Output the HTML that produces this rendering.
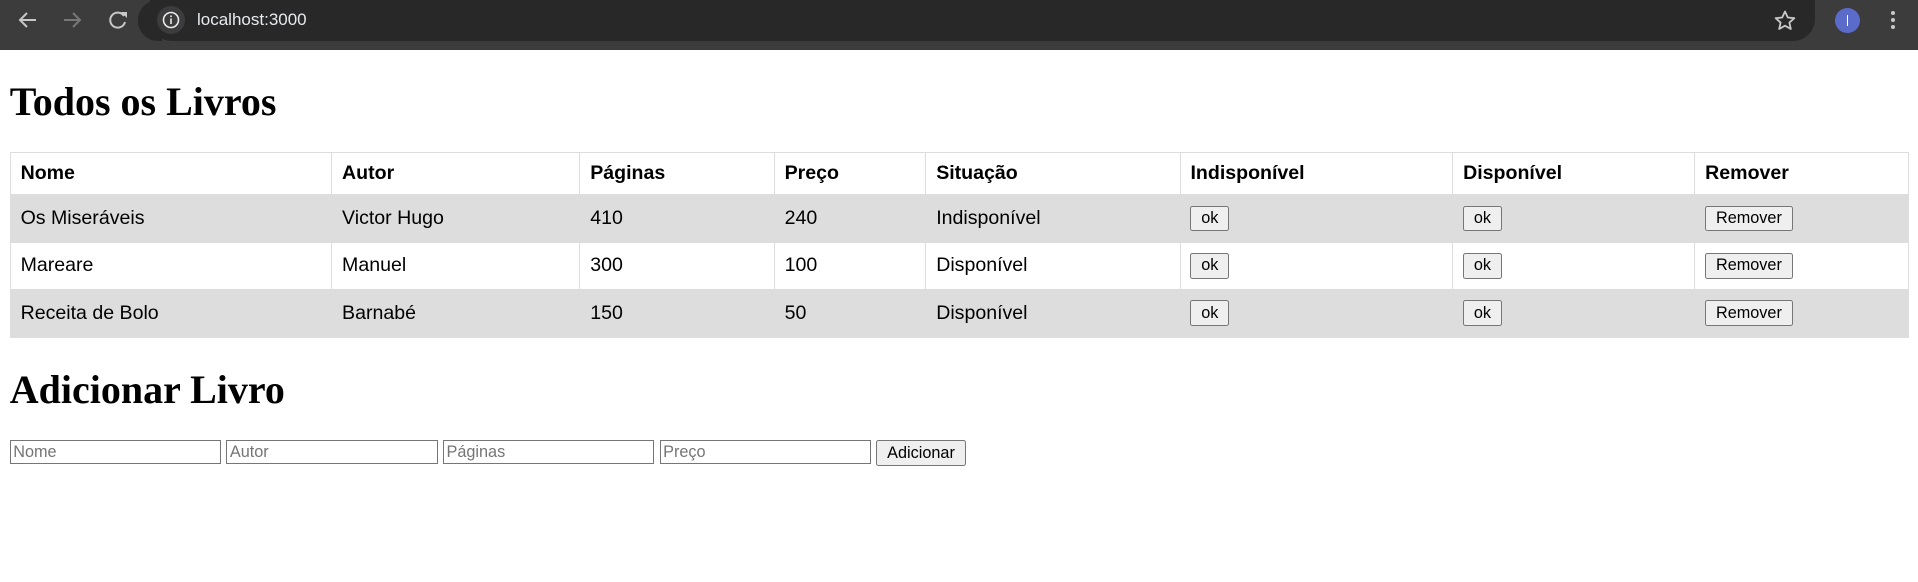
<!DOCTYPE html>
<html><head><meta charset="utf-8"><style>
html,body{margin:0;padding:0;background:#fff;}
#bar{position:absolute;left:0;top:0;width:1918px;height:50px;background:#3c3c3c;}
#pill{position:absolute;left:150px;top:0;width:1665px;height:41px;background:#282828;border-radius:0 0 22px 22px;border-top-left-radius:0;}
#pill:before{content:"";position:absolute;left:-12px;top:0;width:24px;height:41px;background:#282828;border-radius:20px 0 0 20px;}
#info{position:absolute;left:157px;top:6px;width:28px;height:28px;border-radius:50%;background:#3c3c3c;}
#url{position:absolute;left:197px;top:10px;color:#e8eaed;font:17px "Liberation Sans",sans-serif;}
#page{position:absolute;left:0;top:40.9px;width:1568px;zoom:1.2232;font-family:"Liberation Sans",Arial,sans-serif;}
h1,h2{font-family:"Liberation Serif",serif;font-weight:bold;margin:0;position:absolute;left:8px;}
h1{font-size:32.7px;top:23px;}
h2{top:258px;font-size:32.7px;}
table{position:absolute;left:8px;top:83px;width:1553px;border-collapse:collapse;font-size:16px;}
td,th{border:1px solid #ddd;padding:0 8px;text-align:left;}
th{height:34px;font-weight:bold;}
td{height:38px;}
tr.g td{background:#ddd;border-color:#ddd;}
button{font:13.3px "Liberation Sans",Arial,sans-serif;padding:1px 8px;border:1px solid #767676;border-radius:2px;background:#efefef;color:#000;height:21px;}
.f{position:absolute;top:319px;left:8px;display:flex;gap:4.5px;align-items:flex-start;}
input{width:167px;height:16px;border:1px solid #767676;padding:1px 2px;font:13.3px "Liberation Sans",Arial,sans-serif;margin:0;}
input::placeholder{color:#757575;}
</style></head><body>
<div id="bar">
<svg style="position:absolute;left:0;top:0" width="150" height="50">
<g fill="none" stroke-width="2">
<path d="M36 20H20M27 13l-7 7 7 7" stroke="#c8c8c8"/>
<path d="M64 20h16M73 13l7 7-7 7" stroke="#777"/>
<path d="M124 16a7.5 7.5 0 1 0 1 6" stroke="#c8c8c8"/>
</g>
<path d="M121 12h6v6z" fill="#c8c8c8"/>
</svg>
<div id="pill"></div>
<div id="info"></div>
<svg style="position:absolute;left:157px;top:6px" width="28" height="28"><circle cx="14" cy="14" r="7.5" fill="none" stroke="#e8eaed" stroke-width="1.6"/><rect x="13.2" y="12.5" width="1.6" height="5.5" fill="#e8eaed"/><rect x="13.2" y="9.5" width="1.6" height="1.6" fill="#e8eaed"/></svg>
<div id="url">localhost:3000</div>
<svg style="position:absolute;left:1772px;top:8px" width="26" height="26"><path d="M13 3.5l2.8 6 6.5.7-4.9 4.4 1.4 6.4L13 17.7 7.2 21l1.4-6.4-4.9-4.4 6.5-.7z" fill="none" stroke="#c8c8c8" stroke-width="1.8" stroke-linejoin="round"/></svg>
<div style="position:absolute;left:1835px;top:8px;width:25px;height:25px;border-radius:50%;background:#5b6bc9;"></div>
<div style="position:absolute;left:1847px;top:15px;width:1px;height:11px;background:#fff"></div>
<div style="position:absolute;left:1891px;top:11px;width:4px;height:4px;border-radius:50%;background:#c8c8c8;box-shadow:0 7px 0 #c8c8c8,0 14px 0 #c8c8c8"></div>
</div>
<div id="page">
<h1>Todos os Livros</h1>
<table>
<colgroup><col style="width:263px"><col style="width:203px"><col style="width:159px"><col style="width:124px"><col style="width:208px"><col style="width:223px"><col style="width:198px"><col style="width:175px"></colgroup>
<tr><th>Nome</th><th>Autor</th><th>Páginas</th><th>Preço</th><th>Situação</th><th>Indisponível</th><th>Disponível</th><th>Remover</th></tr>
<tr class="g"><td>Os Miseráveis</td><td>Victor Hugo</td><td>410</td><td>240</td><td>Indisponível</td><td><button>ok</button></td><td><button>ok</button></td><td><button>Remover</button></td></tr>
<tr><td>Mareare</td><td>Manuel</td><td>300</td><td>100</td><td>Disponível</td><td><button>ok</button></td><td><button>ok</button></td><td><button>Remover</button></td></tr>
<tr class="g"><td>Receita de Bolo</td><td>Barnabé</td><td>150</td><td>50</td><td>Disponível</td><td><button>ok</button></td><td><button>ok</button></td><td><button>Remover</button></td></tr>
</table>
<h2>Adicionar Livro</h2>
<div class="f"><input placeholder="Nome"><input placeholder="Autor"><input placeholder="Páginas"><input placeholder="Preço"><button>Adicionar</button></div>
</div>
</body></html>
